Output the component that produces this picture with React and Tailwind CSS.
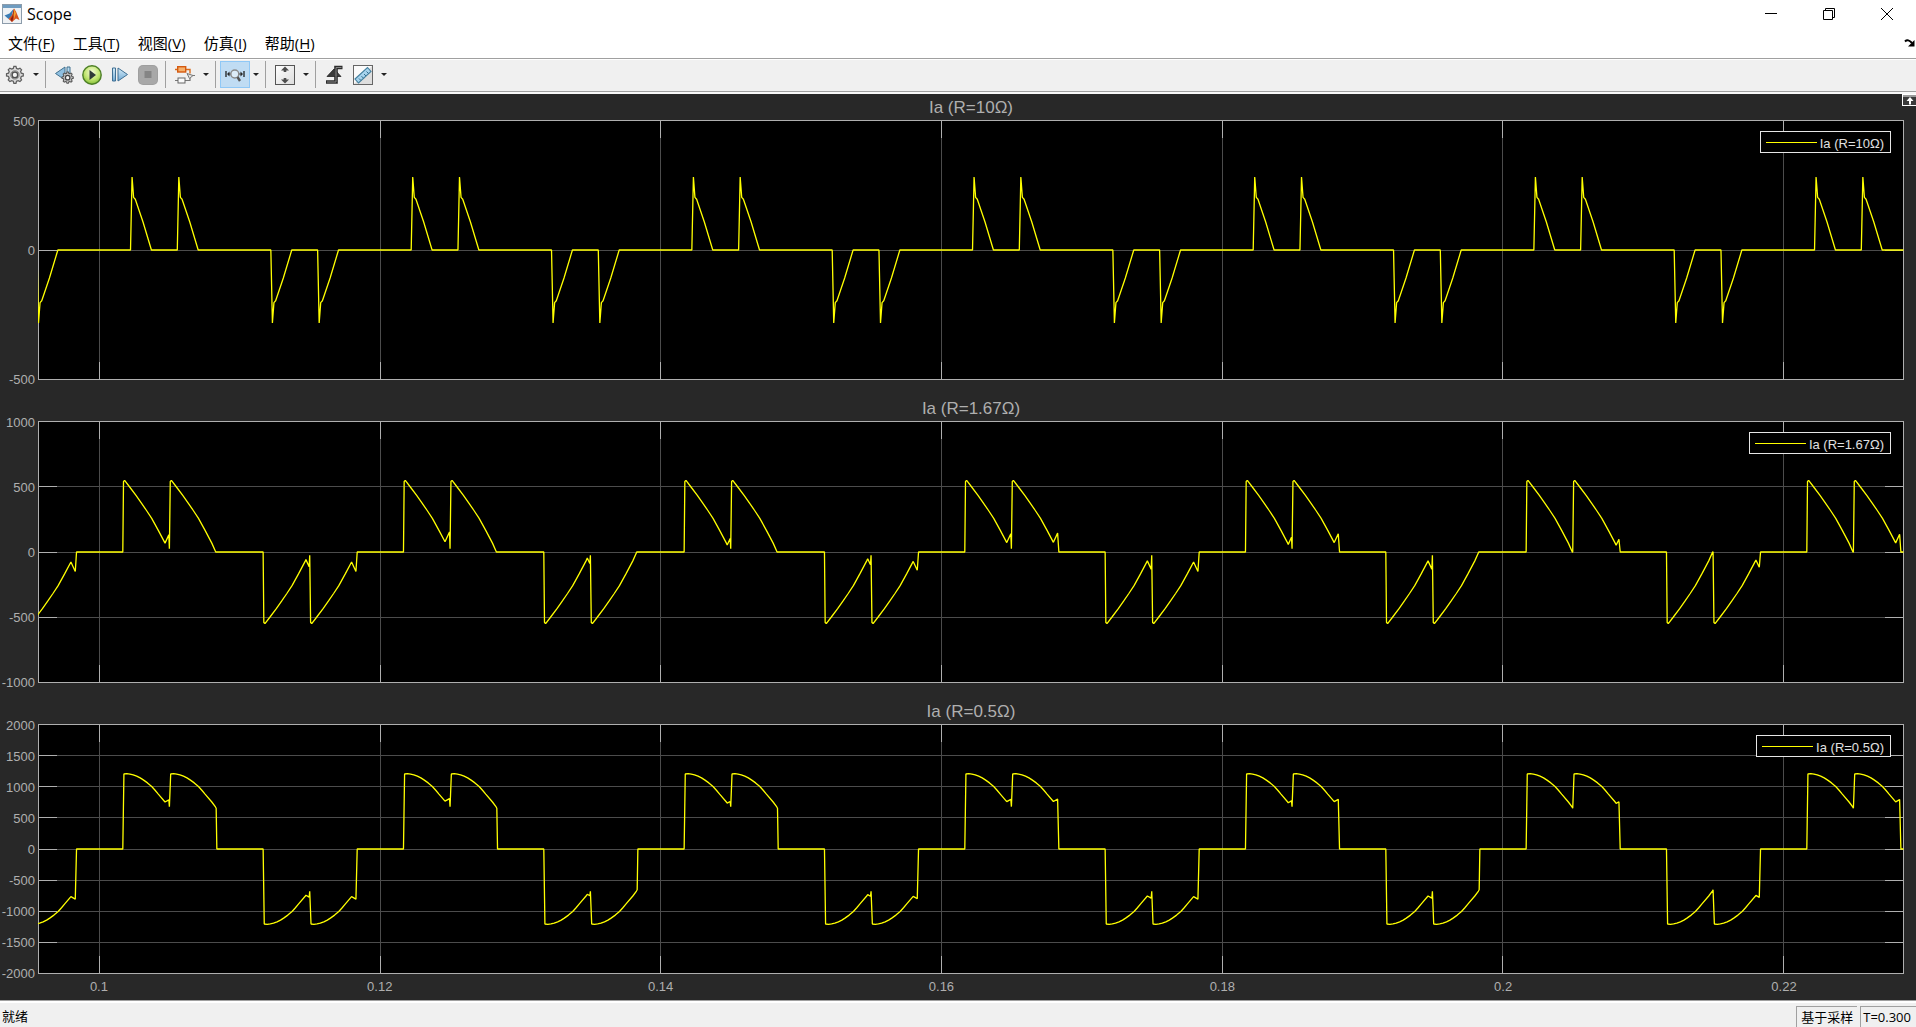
import React, { useLayoutEffect, useRef, useState } from 'react';

// Visible time window in ms, counted from t = 0.1 s
const T_MIN = -4.347;
const T_MAX = 128.55;
const X_TICKS = ['0.1', '0.12', '0.14', '0.16', '0.18', '0.2', '0.22'];

// One conduction interval, [ms from the half cycle start, amps]
const LOW_LOAD = [[2.21, 0], [2.32, 282], [2.43, 203], [2.55, 196], [3.1, 108], [3.7, 0]];
const MID_LOAD = [[1.66, 0], [1.71, 540], [1.79, 549], [2.15, 498], [2.6, 434], [3.0, 373], [3.35, 318], [3.72, 258], [4.19, 166], [4.67, 68], [4.95, 0]];
const HIGH_LOAD = [[1.66, 0], [1.74, 1205], [1.95, 1210], [2.17, 1203], [2.4, 1192], [2.65, 1170], [2.9, 1142], [3.12, 1110], [3.42, 1062], [3.72, 1004], [3.96, 944], [4.19, 882], [4.67, 755], [4.93, 675]];

// Commutation dip of both pulses in every half cycle, starting at 0.09 s (null = no dip)
const DIPS = [
  [4.7, 4.63], [4.67, null], [4.71, 4.63], [4.62, null], [4.76, null],
  [4.73, null], [4.74, 4.65], [4.65, 4.64], [4.67, 4.63], [4.71, 4.65],
  [4.67, null], [null, 4.74], [null, 4.7], [null, 4.66],
];

const PULSE_GAP = 3.333;

const valueAt = (curve, t) => {
  const i = curve.findIndex((p) => p[0] >= t);
  if (i < 1) return curve[curve.length - 1][1];
  const [t0, v0] = curve[i - 1];
  const [t1, v1] = curve[i];
  return v0 + ((v1 - v0) * (t - t0)) / (t1 - t0);
};

const buildLowLoad = () => {
  const points = [];
  DIPS.forEach((_, half) => {
    const start = (half - 1) * 10;
    const sign = half % 2 ? 1 : -1;
    [0, PULSE_GAP].forEach((shift) => {
      LOW_LOAD.forEach(([t, v]) => points.push([start + shift + t, v * sign]));
    });
  });
  return [...points, [T_MAX, 0]];
};

const buildLoaded = (curve, slope, floor) => {
  const points = [];
  DIPS.forEach((dips, half) => {
    const start = (half - 1) * 10;
    const sign = half % 2 ? 1 : -1;
    dips.forEach((dip, n) => {
      const base = start + n * PULSE_GAP;
      const push = (t, v) => points.push([base + t, v * sign]);
      // The second pulse starts from the current that still flows, not from zero
      const body = n ? curve.slice(1) : curve;
      body.filter(([t]) => dip === null || t < dip).forEach(([t, v]) => push(t, v));
      if (dip !== null) {
        const low = valueAt(curve, dip);
        push(dip, low);
        push(4.94, low + (4.94 - dip) * slope);
        if (n === 0) push(4.98, floor + 25);
      } else {
        push(4.98, floor);
      }
      if (n === 1) push(5.03, 0);
    });
  });
  return [...points, [T_MAX, 0]];
};

const PLOTS = [
  { title: 'Ia (R=10Ω)', ticks: [500, 0, -500], points: buildLowLoad(), grow: 'flex-260', head: 'h-[26px]' },
  { title: 'Ia (R=1.67Ω)', ticks: [1000, 500, 0, -500, -1000], points: buildLoaded(MID_LOAD, 235, 0), grow: 'flex-262', head: 'h-[41px]' },
  { title: 'Ia (R=0.5Ω)', ticks: [2000, 1500, 1000, 500, 0, -500, -1000, -1500, -2000], points: buildLoaded(HIGH_LOAD, 130, 655), grow: 'flex-250', head: 'h-[41px]' },
];

const TraceCanvas = ({ ticks, points, title }) => {
  const ref = useRef(null);
  const [size, setSize] = useState({ w: 0, h: 0 });

  useLayoutEffect(() => {
    const measure = () => setSize({ w: ref.current.clientWidth, h: ref.current.clientHeight });
    measure();
    const observer = new ResizeObserver(measure);
    observer.observe(ref.current);
    return () => observer.disconnect();
  }, []);

  const { w, h } = size;
  const max = ticks[0];
  const x = (t) => 0.5 + ((t - T_MIN) / (T_MAX - T_MIN)) * (w - 1);
  const y = (v) => 0.5 + ((max - v) / (2 * max)) * (h - 1);
  const snap = (n) => Math.floor(n) + 0.5;
  const columns = X_TICKS.map((_, i) => snap(x(i * 20)));
  const rows = ticks.slice(1, -1).map((v) => snap(y(v)));

  return (
    <div ref={ref} className="h-full min-h-0 w-full overflow-hidden bg-black">
      {w > 0 && (
        <svg width={w} height={h} className="block" role="img" aria-label={title}>
          <g stroke="#4c4c4c">
            {columns.map((cx) => <line key={cx} x1={cx} x2={cx} y1="0" y2={h} />)}
            {rows.map((cy) => <line key={cy} x1="0" x2={w} y1={cy} y2={cy} />)}
          </g>
          <g stroke="#afafaf" fill="none">
            {columns.map((cx) => <path key={cx} d={`M${cx} 0V18M${cx} ${h - 18}V${h}`} />)}
            {rows.map((cy) => <path key={cy} d={`M0 ${cy}H19M${w - 19} ${cy}H${w}`} />)}
            <rect x="0.5" y="0.5" width={w - 1} height={h - 1} />
          </g>
          <polyline
            fill="none"
            stroke="#ffff00"
            strokeWidth="1.3"
            strokeLinejoin="bevel"
            points={points.map(([t, v]) => `${x(t).toFixed(2)},${y(v).toFixed(2)}`).join(' ')}
          />
        </svg>
      )}
    </div>
  );
};

const Plot = ({ title, ticks, points, grow }) => (
  <section className={`flex min-h-40 ${grow}`}>
    <div className="flex w-[38px] shrink-0 flex-col justify-between pt-[2px] pr-[3px] text-right text-[13px] text-[#afafaf]">
      {ticks.map((v) => (
        <span key={v} className="flex h-0 items-center justify-end">{v}</span>
      ))}
    </div>
    <div className="relative min-w-0 flex-1">
      <TraceCanvas ticks={ticks} points={points} title={title} />
      <div className="absolute top-[11px] right-[13px] flex h-[22px] items-center gap-[3px] border border-[#e6e6e6] bg-black pr-[6px] pl-[5px] text-[13px] text-[#e0e0e0]">
        <span className="h-px w-[51px] bg-[#ffff00]" />
        <span className="pt-[3px] leading-4">{title}</span>
      </div>
    </div>
  </section>
);

const GEAR = 'M9.3 1.5h2.200l.6 2.100 1.700.7 1.900-1 1.700 1.700-1 1.900.7 1.700 2.100.6v2.300l-2.100.6-.7 1.700 1 1.900-1.700 1.700-1.900-1-1.700.7-.6 2.100h-2.200l-.6-2.100-1.700-.7-1.900 1-1.700-1.700 1-1.900-.7-1.700-2.100-.6v-2.300l2.100-.6.7-1.700-1-1.900 1.700-1.700 1.900 1 1.700-.7z';

const GearIcon = () => (
  <svg width="20" height="20" viewBox="0 0 21 21" fill="none">
    <path d={GEAR} fill="#d9d9d9" stroke="#5f5f5f" strokeWidth="1.300" />
    <circle cx="10.400" cy="10.400" r="4.500" fill="#f0f0f0" stroke="#888" strokeWidth="1" />
    <circle cx="10.400" cy="10.400" r="3" fill="#f4f4f4" stroke="#4f4f4f" strokeWidth="1.600" />
  </svg>
);

const StepBackIcon = () => (
  <svg width="20" height="20" viewBox="0 0 20 20">
    <path d="M11 2v13L1.500 8.500z" fill="#8fbfe0" stroke="#41718f" />
    <path d="M13 2h3v9h-3z" fill="#b5d8ee" stroke="#41718f" />
    <g transform="translate(7 6) scale(.64)">
      <path d={GEAR} fill="#c4c4c4" stroke="#555" strokeWidth="1.600" />
      <circle cx="10.400" cy="10.400" r="3.500" fill="#f4f4f4" stroke="#444" strokeWidth="2" />
    </g>
  </svg>
);

const PlayIcon = () => (
  <svg width="20" height="20" viewBox="0 0 20 20">
    <defs>
      <radialGradient id="runFill" cx=".5" cy=".35" r=".65">
        <stop offset="0" stopColor="#f4fbd9" />
        <stop offset=".6" stopColor="#c3e673" />
        <stop offset="1" stopColor="#83bf35" />
      </radialGradient>
    </defs>
    <circle cx="10" cy="10" r="9.200" fill="url(#runFill)" stroke="#4d7f27" strokeWidth="1.400" />
    <path d="M7.500 5L14 10l-6.500 5z" fill="#303a38" />
  </svg>
);

const StepForwardIcon = () => (
  <svg width="18" height="18" viewBox="0 0 18 18">
    <defs>
      <linearGradient id="stepFill" x1="0" y1="0" x2="0" y2="1">
        <stop offset="0" stopColor="#d6ecf8" />
        <stop offset="1" stopColor="#6fa8d3" />
      </linearGradient>
    </defs>
    <path d="M1.500 2h3v13h-3zM7 2l9.500 6.500L7 15z" fill="url(#stepFill)" stroke="#3f6f93" />
  </svg>
);

const StopIcon = () => (
  <svg width="20" height="20" viewBox="0 0 20 20">
    <rect width="20" height="20" rx="5" fill="#9f9f9f" />
    <rect x="1" y="1" width="18" height="18" rx="4" fill="#a8a8a8" />
    <rect x="6.500" y="6" width="7" height="7" fill="#858585" />
  </svg>
);

const BlocksIcon = () => (
  <svg width="20" height="20" viewBox="0 0 20 20" fill="none">
    <path d="M0 4.500h3M11 4.500h4v4" stroke="#d96b1c" strokeWidth="1.400" />
    <rect x="2.700" y="1.700" width="8" height="5.300" fill="#f6b06a" stroke="#d4590f" strokeWidth="1.400" />
    <path d="M0 15.500h3M10 15.500h5v-3M18 10.500h2" stroke="#777" strokeWidth="1.200" />
    <rect x="3" y="13" width="7" height="5" fill="#fafafa" stroke="#666" />
    <path d="M12 8.500l6 2-3.500 3z" fill="#e4e4e4" stroke="#777" />
  </svg>
);

const ZoomIcon = () => (
  <svg width="20" height="20" viewBox="0 0 20 20" fill="none">
    <path d="M1 6v6M19 6v6" stroke="#1f1f1f" strokeWidth="1.300" />
    <path d="M2 9l2.500-2.500v5zM18 9l-2.500-2.500v5z" fill="#222" />
    <path d="M3 9h3M14 9h3" stroke="#333" strokeWidth="1.200" />
    <circle cx="9.800" cy="9" r="4" fill="#dcecf8" stroke="#8a8a8a" strokeWidth="1.500" />
    <path d="M12.500 12l2.500 4" stroke="#555" strokeWidth="2.400" />
  </svg>
);

const FitIcon = () => (
  <svg width="20" height="20" viewBox="0 0 20 20">
    <defs>
      <linearGradient id="fitFill" x1="0" y1="0" x2="1" y2="1">
        <stop offset="0" stopColor="#fff" />
        <stop offset="1" stopColor="#dcdcdc" />
      </linearGradient>
    </defs>
    <rect x=".5" y=".5" width="19" height="19" fill="url(#fitFill)" stroke="#555" />
    <path d="M10 1.500l4 4h-2.700V7H8.700V5.500H6zM10 18.500l4-4h-2.700V13H8.700v1.500H6z" fill="#4c4c4c" />
  </svg>
);

const TriggerIcon = () => (
  <svg width="18" height="20" viewBox="0 0 18 20" fill="none">
    <path d="M17.500 2.500H11V17H1" stroke="#2c2c2c" strokeWidth="3.600" />
    <path d="M2 11.500L9 4l7 7.500z" fill="#3a3a3a" stroke="#222" strokeWidth=".8" />
    <path d="M16.500 2.500H11V17H2" stroke="#858585" strokeWidth="1" />
  </svg>
);

const RulerIcon = () => (
  <svg width="20" height="20" viewBox="0 0 20 20">
    <rect x=".5" y=".5" width="19" height="19" fill="#fbfbfb" stroke="#666" />
    <path d="M1 19L19 1v18z" fill="#dedede" />
    <path d="M2 14L14.500 2.500l3.500 4L5.500 18z" fill="#a8d4ee" stroke="#44809f" strokeWidth="1.100" />
    <path d="M8 15.500l-2-2M10.500 13.200l-2-2M13 11l-2-2M15.500 8.500l-2-2" stroke="#35708f" />
  </svg>
);

const MatlabIcon = () => (
  <svg width="20" height="20" viewBox="0 0 20 20" className="shrink-0">
    <rect x=".5" y=".5" width="19" height="19" fill="#eef1f4" stroke="#8c9cab" />
    <path d="M1 1h18v3H1z" fill="#6f9cc0" />
    <path d="M2.500 11.500l5-2 4-4.500-2 8L6.500 15z" fill="#3b7cb4" />
    <path d="M6.500 15l3.500-4 2-6.500 2 3 3.500 8.500-3.500-1.500L10 18z" fill="#d9541e" />
    <path d="M12 4.500l.8 5L10 18l-1.500-3 2-3z" fill="#8f1d12" />
    <path d="M12.300 5l1.700 4.500L12 15l-.5-4z" fill="#f6a02d" />
  </svg>
);

const ToolButton = ({ label, icon: Icon, wide, active }) => (
  <button
    type="button"
    aria-label={label}
    className={`flex h-[27px] items-center justify-center ${wide ? 'w-[30px]' : 'w-7'} ${active ? 'border border-[#90c8f6] bg-[#c0dcf3]' : ''}`}
  >
    <Icon />
  </button>
);

const Caret = ({ label }) => (
  <button type="button" aria-label={label} className="flex h-[27px] w-3 items-center justify-center">
    <svg width="6" height="3" viewBox="0 0 6 3"><path d="M0 0h6L3 3z" fill="#222" /></svg>
  </button>
);

const Separator = () => <span className="mr-1 ml-[3px] h-[27px] w-px bg-[#a0a0a0]" />;

const MENUS = [['文件', 'F'], ['工具', 'T'], ['视图', 'V'], ['仿真', 'I'], ['帮助', 'H']];

export default function App() {
  return (
    <div className="flex h-screen min-h-[640px] w-full flex-col overflow-hidden bg-white font-['Open_Sans','Noto_Sans_CJK_SC',sans-serif] text-black">
      <header className="flex h-[29px] items-center justify-between pb-px pl-[2px]">
        <div className="flex items-center gap-[5px]">
          <MatlabIcon />
          <h1 className="text-[16px] leading-5">Scope</h1>
        </div>
        <div className="flex">
          <button type="button" aria-label="最小化" className="flex h-7 w-[58px] items-center justify-center">
            <svg width="12" height="13" viewBox="0 0 12 13"><path d="M0 5.500h12" stroke="#000" /></svg>
          </button>
          <button type="button" aria-label="还原" className="flex h-7 w-[58px] items-center justify-center">
            <svg width="12" height="12" viewBox="0 0 12 12" fill="none" stroke="#000">
              <path d="M.5 2.500h9v9h-9zM2.500 2.500v-2h9v9h-2" />
            </svg>
          </button>
          <button type="button" aria-label="关闭" className="flex h-7 w-[58px] items-center justify-center">
            <svg width="12" height="12" viewBox="0 0 12 12" stroke="#000"><path d="M0 0l12 12M12 0L0 12" /></svg>
          </button>
        </div>
      </header>

      <nav className="flex h-[29px] items-center justify-between pb-[2px] pl-2">
        <div className="flex gap-[18px] text-[15px] leading-5">
          {MENUS.map(([name, key]) => (
            <button key={key} type="button">{name}(<u className="underline-offset-2">{key}</u>)</button>
          ))}
        </div>
        <button type="button" aria-label="停靠" className="flex w-3 items-center">
          <svg width="11" height="8" viewBox="0 0 11 8">
            <path d="M1 2.500Q4-.5 8 4" fill="none" stroke="#000" strokeWidth="2" />
            <path d="M10.500 1v6.500H4z" fill="#000" />
          </svg>
        </button>
      </nav>

      <div className="border-t border-[#a0a0a0]">
        <div className="flex h-8 items-center border-t border-t-white bg-[#f0f0f0] pb-[2px]">
          <ToolButton label="配置属性" icon={GearIcon} wide />
          <Caret label="配置选项" />
          <Separator />
          <ToolButton label="步退" icon={StepBackIcon} />
          <ToolButton label="运行" icon={PlayIcon} />
          <ToolButton label="步进" icon={StepForwardIcon} />
          <ToolButton label="停止" icon={StopIcon} />
          <Separator />
          <ToolButton label="高亮模块" icon={BlocksIcon} wide />
          <Caret label="模块选项" />
          <Separator />
          <ToolButton label="缩放" icon={ZoomIcon} wide active />
          <Caret label="缩放选项" />
          <Separator />
          <ToolButton label="缩放坐标轴" icon={FitIcon} wide />
          <Caret label="坐标轴选项" />
          <Separator />
          <ToolButton label="触发器" icon={TriggerIcon} />
          <ToolButton label="游标测量" icon={RulerIcon} wide />
          <Caret label="测量选项" />
        </div>
      </div>
      <div className="h-[3px] border-t border-[#a0a0a0] bg-[#f8f8f8]" />

      <main className="relative flex min-h-0 flex-1 flex-col bg-[#282828] pr-3 font-['Liberation_Sans',sans-serif]">
        <button type="button" aria-label="最大化坐标轴" className="absolute top-0 right-0">
          <svg width="14" height="12" viewBox="0 0 14 12">
            <rect width="14" height="12" fill="#fff" />
            <path d="M1 1h13v10H1z" fill="#3a3a3a" />
            <path d="M1 1h13v2H1z" fill="#9a9a9a" />
            <path d="M8 3l3.500 4H9v3.500H7V7H4.500z" fill="#fff" />
          </svg>
        </button>
        {PLOTS.map(({ head, ...plot }) => (
          <React.Fragment key={plot.title}>
            <h2 className={`flex shrink-0 items-end justify-center pl-[38px] text-[17px] leading-6 text-[#afafaf] ${head}`}>
              {plot.title}
            </h2>
            <Plot {...plot} />
          </React.Fragment>
        ))}
        <div className="ml-[38px] flex h-[26px] shrink-0 items-center justify-between pr-[6.3%] pl-[3.2%] text-[13px] text-[#afafaf]">
          {X_TICKS.map((t) => (
            <span key={t} className="flex w-0 justify-center">{t}</span>
          ))}
        </div>
      </main>

      <footer className="flex h-[27px] items-end justify-between border-t border-[#a0a0a0] bg-[#f0f0f0] pl-[2px] text-[13px] shadow-[inset_0_2px_0_#ffffff]">
        <span className="leading-[21px]">就绪</span>
        <div className="flex gap-[3px] leading-[20px]">
          <span className="border-t border-l border-[#a0a0a0] px-[4px]">基于采样</span>
          <span className="border-t border-l border-[#a0a0a0] pr-[5px] pl-[2px]">T=0.300</span>
        </div>
      </footer>
    </div>
  );
}
